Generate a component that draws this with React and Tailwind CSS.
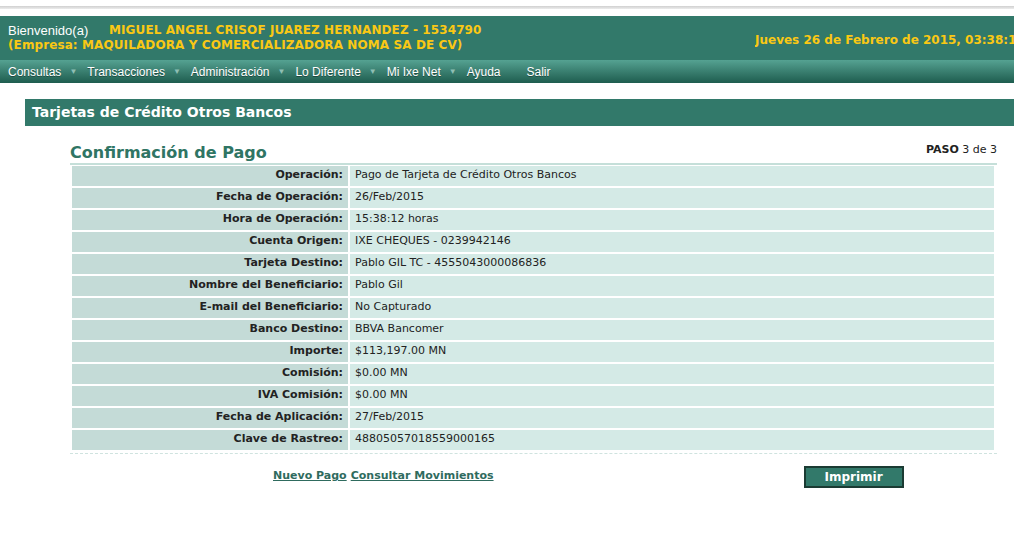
import React from "react";

const rows = [
    ["Operación:", "Pago de Tarjeta de Crédito Otros Bancos"],
    ["Fecha de Operación:", "26/Feb/2015"],
    ["Hora de Operación:", "15:38:12 horas"],
    ["Cuenta Origen:", "IXE CHEQUES - 0239942146"],
    ["Tarjeta Destino:", "Pablo GIL TC - 4555043000086836"],
    ["Nombre del Beneficiario:", "Pablo Gil"],
    ["E-mail del Beneficiario:", "No Capturado"],
    ["Banco Destino:", "BBVA Bancomer"],
    ["Importe:", "$113,197.00 MN"],
    ["Comisión:", "$0.00 MN"],
    ["IVA Comisión:", "$0.00 MN"],
    ["Fecha de Aplicación:", "27/Feb/2015"],
    ["Clave de Rastreo:", "48805057018559000165"],
];

const menu = ["Consultas", "Transacciones", "Administración", "Lo Diferente", "Mi Ixe Net"];

const verdana = { fontFamily: "Verdana, 'DejaVu Sans', sans-serif" };

const App = () => {
    return (
        <div className="w-[1014px] h-[546px] bg-white overflow-hidden" style={verdana}>
            {/* top strip */}
            <div className="h-[16px] pt-[6px]">
                <div className="h-[3px] bg-gradient-to-b from-[#d0d0d0] to-[#ececec]" />
            </div>

            {/* header */}
            <div className="h-[44px] bg-[#32796a] flex items-start justify-between pl-[8px] pt-[7px] whitespace-nowrap overflow-hidden">
                <div className="text-[12px] leading-[15px]">
                    <div className="flex">
                        <span className="text-white text-[13px] w-[101px]" style={{ fontFamily: "'Liberation Sans', Arial, sans-serif" }}>
                            Bienvenido(a)
                        </span>
                        <span className="text-[#fac814] font-bold tracking-[0.1px]">MIGUEL ANGEL CRISOF JUAREZ HERNANDEZ - 1534790</span>
                    </div>
                    <div className="text-[#fac814] font-bold tracking-[0.1px]">(Empresa: MAQUILADORA Y COMERCIALIZADORA NOMA SA DE CV)</div>
                </div>
                <div className="text-[#fac814] font-bold text-[12px] pt-[8px] w-[259px] overflow-hidden shrink-0">
                    Jueves 26 de Febrero de 2015, 03:38:1
                </div>
            </div>

            {/* menu */}
            <div
                className="h-[23px] bg-gradient-to-b from-[#55a292] to-[#1e5d4f] flex items-center pl-[8px] text-white text-[12px]"
                style={{ fontFamily: "'Liberation Sans', Arial, sans-serif" }}
            >
                {menu.map((m) => (
                    <div key={m} className="flex items-center">
                        <span className="[text-shadow:0_1px_0_rgba(0,0,0,0.35)]">{m}</span>
                        <span className="text-[#8fbfb4] text-[8px] ml-[8px] mr-[10px]">▼</span>
                    </div>
                ))}
                <span className="[text-shadow:0_1px_0_rgba(0,0,0,0.35)]">Ayuda</span>
                <span className="ml-[26px] [text-shadow:0_1px_0_rgba(0,0,0,0.35)]">Salir</span>
            </div>

            {/* section title */}
            <div className="ml-[25px] mt-[16px] h-[27px] bg-[#32796a] flex items-center pl-[7px]">
                <span className="text-white font-bold text-[14px]">Tarjetas de Crédito Otros Bancos</span>
            </div>

            {/* content */}
            <div className="ml-[70px] w-[927px] mt-[16px]">
                <div className="flex items-end justify-between border-b-2 border-[#c5dfd9] pb-[1px]">
                    <span className="text-[#2f7564] font-bold text-[16px] leading-[19px]">Confirmación de Pago</span>
                    <span className="text-[11px] text-[#222] mb-[3px]">
                        <b>PASO</b> 3 de 3
                    </span>
                </div>
                <div className="pl-[2px] pr-[3px] pt-[1px] border-b border-dashed border-[#cfe3df] pb-[1px]">
                    {rows.map(([k, v]) => (
                        <div key={k} className="flex h-[22px] border-b-2 border-white text-[11px] text-[#222]">
                            <div className="w-[276px] bg-[#c4dbd7] font-bold text-right pr-[5px] flex items-center justify-end">{k}</div>
                            <div className="ml-[2px] flex-1 bg-[#d4eae6] pl-[5px] flex items-center">{v}</div>
                        </div>
                    ))}
                </div>
                <div className="flex items-center mt-[12px]">
                    <div className="ml-[203px] flex gap-[4px] text-[11px] font-bold text-[#2f6b5e]">
                        <span className="underline">Nuevo Pago</span>
                        <span className="underline">Consultar Movimientos</span>
                    </div>
                    <div className="ml-[310px] w-[100px] h-[22px] bg-[#32796a] border-2 border-[#1b3b33] flex items-center justify-center text-white font-bold text-[12px]">
                        Imprimir
                    </div>
                </div>
            </div>
        </div>
    );
};

export default App;
